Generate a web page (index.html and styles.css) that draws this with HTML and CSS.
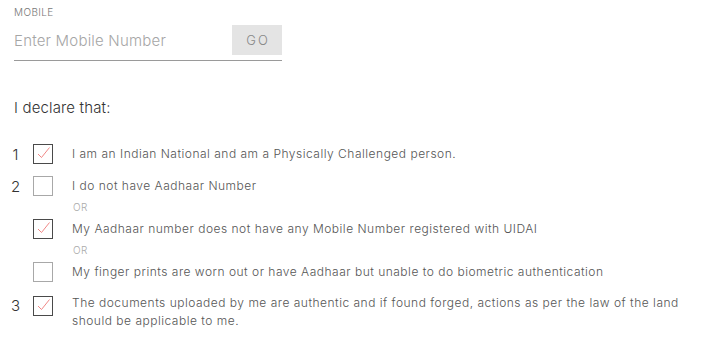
FILE: index.html
```html
<!DOCTYPE html>
<html>
<head>
<meta charset="utf-8">
<link rel="stylesheet" href="styles.css">
</head>
<body>
<div class="page">
  <div class="mobile">
    <div class="label">MOBILE</div>
    <div class="field">
      <span class="placeholder">Enter Mobile Number</span>
      <button class="go">GO</button>
    </div>
  </div>

  <div class="declare">I declare that:</div>

  <div class="list">
    <div class="item r1">
      <span class="num">1</span>
      <span class="box checked"><svg viewBox="0 0 20 20" width="20" height="20"><path d="M5 10 L8.5 13.5 L16.5 3.5" fill="none" stroke="#ee7a78" stroke-width="0.9"/></svg></span>
      <span class="text">I am an Indian National and am a Physically Challenged person.</span>
    </div>
    <div class="item r2">
      <span class="num">2</span>
      <span class="box"></span>
      <span class="text">I do not have Aadhaar Number</span>
    </div>
    <div class="or">OR</div>
    <div class="item">
      <span class="num"></span>
      <span class="box checked"><svg viewBox="0 0 20 20" width="20" height="20"><path d="M5 10 L8.5 13.5 L16.5 3.5" fill="none" stroke="#ee7a78" stroke-width="0.9"/></svg></span>
      <span class="text">My Aadhaar number does not have any Mobile Number registered with UIDAI</span>
    </div>
    <div class="or">OR</div>
    <div class="item">
      <span class="num"></span>
      <span class="box"></span>
      <span class="text">My finger prints are worn out or have Aadhaar but unable to do biometric authentication</span>
    </div>
    <div class="item r3 top">
      <span class="num">3</span>
      <span class="box checked"><svg viewBox="0 0 20 20" width="20" height="20"><path d="M5 10 L8.5 13.5 L16.5 3.5" fill="none" stroke="#ee7a78" stroke-width="0.9"/></svg></span>
      <span class="text">The documents uploaded by me are authentic and if found forged, actions as per the law of the land should be applicable to me.</span>
    </div>
  </div>
</div>
</body>
</html>
```

FILE: styles.css
```css
html, body {
  margin: 0;
  padding: 0;
  background: #ffffff;
}
body {
  font-family: Inter, "Open Sans", sans-serif;
  font-weight: 300;
  color: #444;
}
.page {
  width: 705px;
  height: 359px;
  overflow: hidden;
}
.mobile {
  margin-left: 14px;
  width: 268px;
  padding-top: 6px;
}
.label {
  font-size: 10px;
  line-height: 12px;
  color: #777;
  letter-spacing: 0.4px;
}
.field {
  margin-top: 7px;
  display: flex;
  align-items: center;
  justify-content: space-between;
  border-bottom: 1px solid #9a9a9a;
  padding-bottom: 5px;
}
.placeholder {
  font-size: 15px;
  letter-spacing: 0.2px;
  color: #a6a6a6;
}
.go {
  width: 50px;
  height: 30px;
  border: none;
  background: #e4e4e4;
  color: #888;
  font-family: inherit;
  font-size: 13px;
  font-weight: 300;
  letter-spacing: 2px;
  padding: 0 0 0 2px;
}
.declare {
  margin: 38px 0 0 14px;
  font-size: 15px;
  letter-spacing: 0.15px;
  line-height: 18px;
  color: #333;
}
.list {
  margin-top: 27px;
  padding-left: 10px;
}
.item {
  display: flex;
  align-items: center;
  min-height: 20px;
}
.item.top {
  align-items: flex-start;
}
.r2 { margin-top: 12px; }
.r3 { margin-top: 14px; }
.num {
  width: 11px;
  text-align: center;
  font-size: 15px;
  color: #333;
  font-weight: 300;
}
.box {
  width: 18px;
  height: 18px;
  margin-left: 12px;
  border: 1px solid #a8a8a8;
  flex: none;
  position: relative;
}
.box.checked {
  border-color: #4a4a4a;
}
.box svg {
  position: absolute;
  left: -1px;
  top: -1px;
}
.text {
  margin-left: 19px;
  font-size: 12px;
  letter-spacing: 0.5px;
  line-height: 18px;
  color: #555;
  max-width: 620px;
}
.top .text {
  margin-top: -2px;
}
.or {
  height: 23px;
  line-height: 23px;
  padding-left: 63px;
  font-size: 10px;
  letter-spacing: 0.5px;
  color: #aaa;
}
```
